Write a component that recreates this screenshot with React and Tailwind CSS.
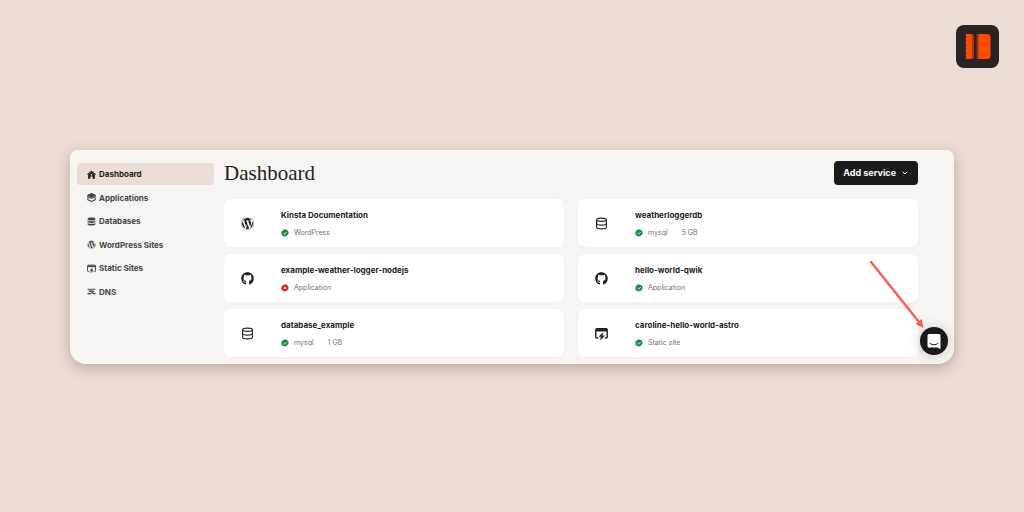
import React from "react";
import { ChevronDown, Database } from "lucide-react";
import { FaGithub, FaWordpress } from "react-icons/fa";

// --- Small icons ---
const HomeIcon = ({ className }) => (
  <svg viewBox="0 0 16 16" className={className} fill="none" stroke="currentColor" strokeWidth="1.8">
    <path d="M.8 8.4 8 2l7.2 6.4" />
    <path d="M2 8.2 8 3.5l6 4.700V15.500h-4v-4H6v4H2z" fill="currentColor" stroke="none" />
    <circle cx="8" cy="8.500" r="1.500" fill="#ebdcd5" stroke="none" />
  </svg>
);

const LayersIcon = ({ className }) => (
  <svg viewBox="0 0 16 16" className={className} fill="none" stroke="currentColor" strokeWidth="2" strokeLinejoin="round">
    <path d="M8 1 14.5 4 8 7 1.5 4z" fill="currentColor" />
    <path d="M1.5 4v2.500L8 9.500l6.500-3V4" />
    <path d="M1.5 8v4L8 15l6.500-3V8" />
  </svg>
);

const StackIcon = ({ className }) => (
  <svg viewBox="0 0 16 16" className={className} fill="currentColor">
    <path d="M1 3c0-1.4 3-2.3 7-2.3S15 1.6 15 3v1c0 1.3-3 2.2-7 2.2S1 5.3 1 4z" />
    <path d="M1 6c1.5 1.2 4 1.6 7 1.6s5.5-.4 7-1.6v2.6c0 1.3-3 2.1-7 2.1s-7-.8-7-2.1z" />
    <path d="M1 10.6c1.5 1.2 4 1.6 7 1.6s5.5-.4 7-1.6V13c0 1.4-3 2.3-7 2.3S1 14.4 1 13z" />
  </svg>
);

const StaticIcon = ({ className }) => (
  <svg viewBox="0 0 16 16" className={className} fill="none" stroke="currentColor" strokeWidth="1.7">
    <path d="M4 13.500H2.200a1.200 1.200 0 0 1-1.200-1.200V3.200A1.200 1.200 0 0 1 2.200 2h11.600A1.200 1.200 0 0 1 15 3.200v9.100a1.200 1.200 0 0 1-1.200 1.200H12" />
    <path d="M1 4h14" strokeWidth="3" />
    <path d="M9.500 7 5 11.800h2.500L6.800 16l4.800-5.200H9z" fill="currentColor" stroke="currentColor" strokeWidth=".5" />
  </svg>
);

const DnsIcon = ({ className }) => (
  <svg viewBox="0 0 16 16" className={className} fill="none" stroke="currentColor" strokeWidth="2.2">
    <path d="M1 4h3.500c3 0 4 7.600 7 7.600H15" />
    <path d="M7.500 4H15M1 11.600h7" />
    <path d="M3 7.800h4M9 7.800h4" />
  </svg>
);

const StatusIcon = ({ ok }) => (
  <svg viewBox="0 0 16 16" className="size-2 shrink-0" role="img" aria-label={ok ? "Running" : "Failed"}>
    <path
      d="M8 .3 10.2 1.5l2.5.3.9 2.3 1.800 1.800L15 8.400l-.2 2.500-2.200 1.300-1.500 2-2.500.1L6 15.200l-1.900-1.600-2.400-.8-.6-2.500L.4 8l1.100-2.200.3-2.500 2.400-.8L6 .8z"
      fill={ok ? "#1b8d48" : "#e02b0b"}
    />
    {ok ? (
      <path d="m5 8.3 2.2 2.1 3.900-4.300" fill="none" stroke="white" strokeWidth="1.6" />
    ) : (
      <path d="m5.500 5.500 5 5m0-5-5 5" stroke="white" strokeWidth="1.6" />
    )}
  </svg>
);

const Logo = () => (
  <svg viewBox="0 0 43 43" className="size-[43px]" role="img" aria-label="Logo">
    <rect width="43" height="43" rx="8" fill="#2a2223" />
    <path d="M9.500 9h5.500q3 0 3 3v19q0 3-3 3H9.500l.7-2-.7-2 .7-2-.7-2 .7-2-.7-2 .7-2-.7-2 .7-2-.7-2 .7-2z" fill="#fb4b08" />
    <path d="M14.500 9q3.500 0 3.500 3v19q0 3-3.500 3 1.500-1 1.500-3V12q0-2-1.500-3z" fill="#a93710" />
    <path d="M20.500 9H23v25h-2.500z" fill="#8f3415" />
    <path d="M22.500 9H31q3.500 0 3.500 3.500v18q0 3.500-3.500 3.500h-8.500z" fill="#ff4a00" />
  </svg>
);

const navItems = [
  { label: "Dashboard", icon: HomeIcon, active: true },
  { label: "Applications", icon: LayersIcon },
  { label: "Databases", icon: StackIcon },
  { label: "WordPress Sites", icon: FaWordpress },
  { label: "Static Sites", icon: StaticIcon },
  { label: "DNS", icon: DnsIcon },
];

const services = [
  { name: "Kinsta Documentation", type: "WordPress", icon: FaWordpress, ok: true },
  { name: "weatherloggerdb", type: "mysql", size: "5 GB", icon: Database, ok: true },
  { name: "example-weather-logger-nodejs", type: "Application", icon: FaGithub, ok: false },
  { name: "hello-world-qwik", type: "Application", icon: FaGithub, ok: true },
  { name: "database_example", type: "mysql", size: "1 GB", icon: Database, ok: true },
  { name: "caroline-hello-world-astro", type: "Static site", icon: StaticIcon, ok: true },
];

const ServiceCard = ({ service }) => {
  const Icon = service.icon;
  return (
    <li className="flex h-12 items-center gap-[27px] rounded-md bg-white pl-[17px] shadow-[0_0_1px_#e5dad4]">
      <Icon className="size-[13px] shrink-0 text-[#231f20]" />
      <div className="flex flex-col gap-[6px] pt-[2px]">
        <h2 className="text-[8px] leading-3 font-bold text-[#231f20]">{service.name}</h2>
        <p className="flex items-center text-[7px] leading-3 text-[#7d706c]">
          <StatusIcon ok={service.ok} />
          <span className="ml-[5px]">{service.type}</span>
          {service.size && <span className="ml-[14px]">{service.size}</span>}
        </p>
      </div>
    </li>
  );
};

export default function App() {
  return (
    <div className="min-h-screen bg-[#ebdcd5] font-['Inter',sans-serif]">
      <header className="flex justify-end px-[25px] pt-[25px]">
        <Logo />
      </header>

      <div className="relative mx-[70px] mt-[82px] flex gap-[10px] rounded-t-lg rounded-b-2xl bg-[#f8f4f1] pr-9 pb-[7px] pl-[7px] shadow-[0_4px_14px_rgba(80,50,40,0.3)]">
        {/* Sidebar */}
        <nav className="w-[137px] shrink-0 pt-[13px]">
          <ul className="flex h-[140px] flex-col justify-between">
            {navItems.map(({ label, icon: Icon, active }) => (
              <li key={label}>
                <a
                  href="#"
                  className={`flex h-[22px] items-center gap-[3px] rounded-[3px] pl-[10px] text-[8px] font-bold ${
                    active ? "bg-[#ebdcd5] text-[#231f20]" : "text-[#4a4342]"
                  }`}
                >
                  <Icon className="size-[9px] shrink-0" />
                  {label}
                </a>
              </li>
            ))}
          </ul>
        </nav>

        {/* Services */}
        <main className="min-w-0 flex-1 pt-[11px]">
          <div className="flex items-center justify-between">
            <h1 className="font-['Liberation_Serif',serif] text-[21px] leading-6 text-[#231f20]">Dashboard</h1>
            <button
              type="button"
              className="flex h-6 items-center gap-[5px] rounded bg-[#1d1919] px-[9px] text-[9px] font-bold text-white"
            >
              Add service
              <ChevronDown className="size-2" strokeWidth={3} />
            </button>
          </div>
          <ul className="mt-[14px] grid grid-cols-2 gap-x-[14px] gap-y-[7px]">
            {services.map((service) => (
              <ServiceCard key={service.name} service={service} />
            ))}
          </ul>
        </main>

        {/* Arrow pointing at the chat launcher */}
        <svg viewBox="0 0 56 68" className="absolute right-[29px] bottom-[35px] h-[68px] w-14" aria-hidden="true">
          <path d="M2 1 50 61" stroke="#fb5f55" strokeWidth="2.5" strokeLinecap="round" />
          <path d="m54.500 67-8-4 6-5z" fill="#fb5f55" />
        </svg>

        <button
          type="button"
          aria-label="Open chat"
          className="absolute right-[6px] bottom-[9px] flex size-7 items-center justify-center rounded-full bg-[#1d1919] shadow-[0_1px_14px_rgba(0,0,0,0.18)]"
        >
          <svg viewBox="0 0 14 15" className="h-[15px] w-[14px]">
            <path d="M2 0h10a1.500 1.500 0 0 1 1.500 1.500V15L10 13.500H2A1.500 1.500 0 0 1 .500 12V1.500A1.500 1.500 0 0 1 2 0z" fill="white" />
            <path d="M3 9.500q4 2.800 8 0" fill="none" stroke="#1d1919" strokeLinecap="round" />
          </svg>
        </button>
      </div>
    </div>
  );
}
